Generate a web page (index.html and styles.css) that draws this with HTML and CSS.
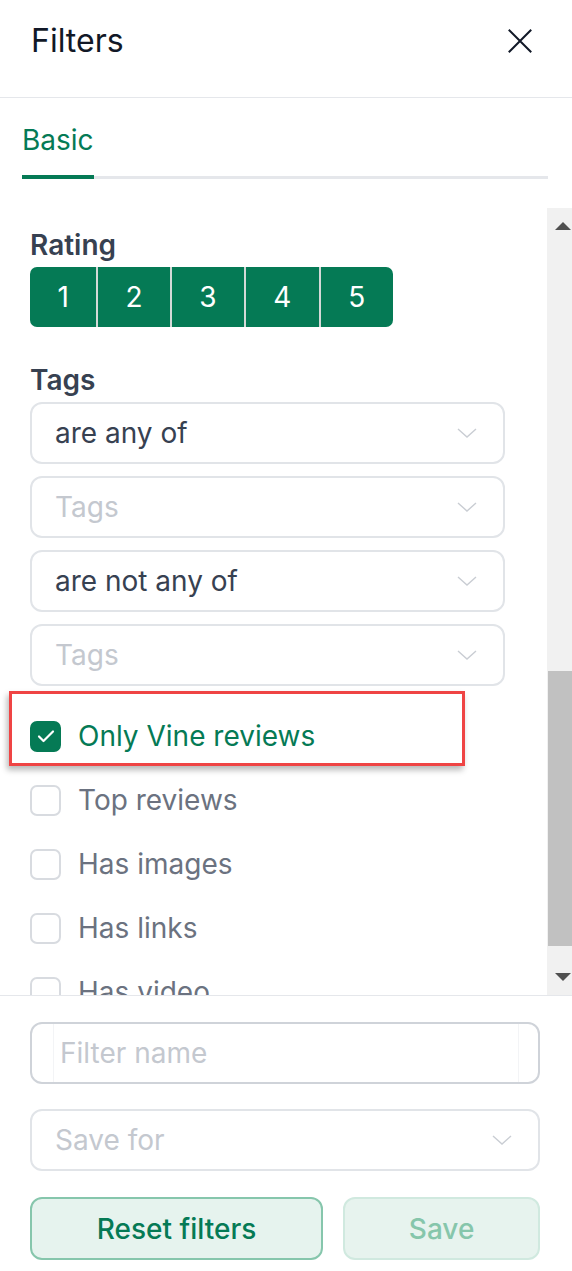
FILE: index.html
```html
<!DOCTYPE html>
<html lang="en">
<head>
<meta charset="utf-8">
<title>Filters</title>
<link rel="stylesheet" href="styles.css">
</head>
<body>
<div class="panel">
  <header class="header">
    <h1 class="title">Filters</h1>
    <button class="close" aria-label="Close">
      <svg width="24" height="24" viewBox="0 0 24 24" fill="none" stroke="#111827" stroke-width="2" stroke-linecap="square"><path d="M1.5 1.5 L22.5 22.5 M22.5 1.5 L1.5 22.5"/></svg>
    </button>
  </header>

  <nav class="tabs">
    <span class="tab active">Basic</span>
  </nav>

  <div class="body">
    <div class="content">
      <div class="label">Rating</div>
      <div class="rating">
        <span class="rate">1</span>
        <span class="rate">2</span>
        <span class="rate">3</span>
        <span class="rate">4</span>
        <span class="rate">5</span>
      </div>

      <div class="label tags-label">Tags</div>
      <div class="selects">
        <div class="select"><span class="value">are any of</span><svg class="chev" width="20" height="10" viewBox="0 0 20 10" fill="none" stroke="#c9cdd3" stroke-width="1.4"><path d="M1 1 L10 9 L19 1"/></svg></div>
        <div class="select"><span class="value placeholder">Tags</span><svg class="chev" width="20" height="10" viewBox="0 0 20 10" fill="none" stroke="#c9cdd3" stroke-width="1.4"><path d="M1 1 L10 9 L19 1"/></svg></div>
        <div class="select"><span class="value">are not any of</span><svg class="chev" width="20" height="10" viewBox="0 0 20 10" fill="none" stroke="#c9cdd3" stroke-width="1.4"><path d="M1 1 L10 9 L19 1"/></svg></div>
        <div class="select"><span class="value placeholder">Tags</span><svg class="chev" width="20" height="10" viewBox="0 0 20 10" fill="none" stroke="#c9cdd3" stroke-width="1.4"><path d="M1 1 L10 9 L19 1"/></svg></div>
      </div>

      <div class="checks">
        <div class="check checked">
          <span class="box"><svg width="18" height="14" viewBox="0 0 18 14" fill="none" stroke="#ffffff" stroke-width="2.2" stroke-linecap="round" stroke-linejoin="round"><path d="M2 7.5 L6.5 12 L16 2.5"/></svg></span>
          <span class="check-label">Only Vine reviews</span>
          <span class="highlight"></span>
        </div>
        <div class="check"><span class="box"></span><span class="check-label">Top reviews</span></div>
        <div class="check"><span class="box"></span><span class="check-label">Has images</span></div>
        <div class="check"><span class="box"></span><span class="check-label">Has links</span></div>
        <div class="check"><span class="box"></span><span class="check-label">Has video</span></div>
      </div>
    </div>

    <div class="scrollbar">
      <div class="sb-btn"><svg width="16" height="8" viewBox="0 0 16 8"><path d="M0 8 L8 0 L16 8 Z" fill="#505050"/></svg></div>
      <div class="sb-track"><div class="sb-thumb"></div></div>
      <div class="sb-btn"><svg width="16" height="8" viewBox="0 0 16 8"><path d="M0 0 L16 0 L8 8 Z" fill="#505050"/></svg></div>
    </div>
  </div>

  <footer class="footer">
    <div class="input"><div class="input-inner"><span class="placeholder">Filter name</span></div></div>
    <div class="select footer-select"><span class="value placeholder">Save for</span><svg class="chev" width="20" height="10" viewBox="0 0 20 10" fill="none" stroke="#c9cdd3" stroke-width="1.4"><path d="M1 1 L10 9 L19 1"/></svg></div>
    <div class="actions">
      <button class="btn reset">Reset filters</button>
      <button class="btn save">Save</button>
    </div>
  </footer>
</div>
</body>
</html>
```

FILE: styles.css
```css
* { box-sizing: border-box; }

html, body {
  margin: 0;
  padding: 0;
  background: #ffffff;
}

body {
  font-family: "Inter", "Noto Sans", sans-serif;
  font-size: 28px;
  line-height: 36px;
  color: #374151;
}

.panel {
  width: 572px;
  height: 1271px;
  display: flex;
  flex-direction: column;
  overflow: hidden;
}

/* Header */
.header {
  height: 98px;
  padding: 0 40px 15px 31px;
  border-bottom: 1px solid #e5e7eb;
  display: flex;
  align-items: center;
  justify-content: space-between;
  flex-shrink: 0;
}

.title {
  margin: 0;
  font-size: 32px;
  font-weight: 400;
  line-height: 40px;
  color: #111827;
}

.close {
  border: 0;
  background: none;
  padding: 0;
  width: 24px;
  height: 24px;
  display: flex;
}

/* Tabs */
.tabs {
  margin: 0 24px 0 22px;
  padding-top: 24px;
  border-bottom: 3px solid #e5e7eb;
  display: flex;
  flex-shrink: 0;
}

.tab {
  padding-bottom: 17px;
  margin-bottom: -3px;
  border-bottom: 4px solid transparent;
  line-height: 36px;
}

.tab.active {
  color: #057a55;
  border-bottom-color: #057a55;
}

/* Scroll body */
.body {
  margin-top: 29px;
  height: 787px;
  display: flex;
  flex-shrink: 0;
}

.content {
  flex: 1;
  overflow: hidden;
  padding: 19px 42px 0 30px;
}

.label {
  font-weight: 600;
  color: #374151;
}

.tags-label {
  margin-top: 35px;
}

.rating {
  margin-top: 4px;
  display: inline-flex;
  height: 60px;
  border-radius: 7px;
  overflow: hidden;
  vertical-align: top;
}

.rate {
  background: #057a55;
  color: #ffffff;
  padding: 0 27.4px;
  display: flex;
  align-items: center;
  justify-content: center;
}

.rate:first-child {
  padding: 0 27px 0 27.6px;
}

.rate + .rate {
  border-left: 2px solid #d4d9d7;
}

.selects {
  margin-top: 4px;
  display: flex;
  flex-direction: column;
  gap: 12px;
}

.select {
  height: 62px;
  border: 2px solid #e1e4e8;
  border-radius: 12px;
  padding: 0 26px 0 23px;
  display: flex;
  align-items: center;
  justify-content: space-between;
}

.value {
  color: #374151;
}

.placeholder {
  color: #c4c8cf;
}

.chev {
  display: block;
}

.checks {
  margin-top: 30px;
  display: flex;
  flex-direction: column;
  gap: 24px;
}

.check {
  position: relative;
  height: 40px;
  display: flex;
  align-items: center;
  gap: 17px;
  color: #6b7280;
}

.box {
  width: 31px;
  height: 31px;
  border: 2px solid #d8dbe0;
  border-radius: 7px;
  display: flex;
  align-items: center;
  justify-content: center;
  flex-shrink: 0;
}

.check.checked {
  color: #057a55;
}

.check.checked .box {
  background: #057a55;
  border-color: #057a55;
}

.highlight {
  position: absolute;
  left: -21px;
  top: -25px;
  width: 456px;
  height: 75px;
  border: 3px solid #ef4444;
  box-shadow: -2px 4px 6px rgba(0, 0, 0, 0.28);
  pointer-events: none;
}

/* Scrollbar */
.scrollbar {
  width: 25px;
  background: #f1f1f1;
  display: flex;
  flex-direction: column;
  flex-shrink: 0;
}

.sb-btn {
  height: 36px;
  display: flex;
  align-items: center;
  padding-left: 8px;
}

.sb-track {
  flex: 1;
  padding-top: 427px;
  padding-left: 1px;
}

.sb-thumb {
  height: 275px;
  background: #c1c1c1;
}

/* Footer */
.footer {
  border-top: 1px solid #e5e7eb;
  padding: 26px 32px 0 30px;
  display: flex;
  flex-direction: column;
}

.input {
  height: 62px;
  border: 2px solid #cfd3d9;
  border-radius: 12px;
  padding: 0 19px 0 21px;
  display: flex;
}

.input-inner {
  flex: 1;
  border-left: 1px solid #f3f4f6;
  border-right: 1px solid #f3f4f6;
  padding-left: 6px;
  display: flex;
  align-items: center;
}

.footer-select {
  margin-top: 25px;
}

.actions {
  margin-top: 26px;
  display: flex;
  gap: 20px;
}

.btn {
  height: 63px;
  border-radius: 12px;
  font-family: inherit;
  font-size: 28px;
  font-weight: 500;
  padding: 0;
}

.reset {
  flex: 3;
  background: #e6f3ee;
  border: 2px solid #86c6ac;
  color: #057a55;
}

.save {
  flex: 2;
  background: #e7f3ee;
  border: 2px solid #d0e9df;
  color: #86c6ab;
}
```
